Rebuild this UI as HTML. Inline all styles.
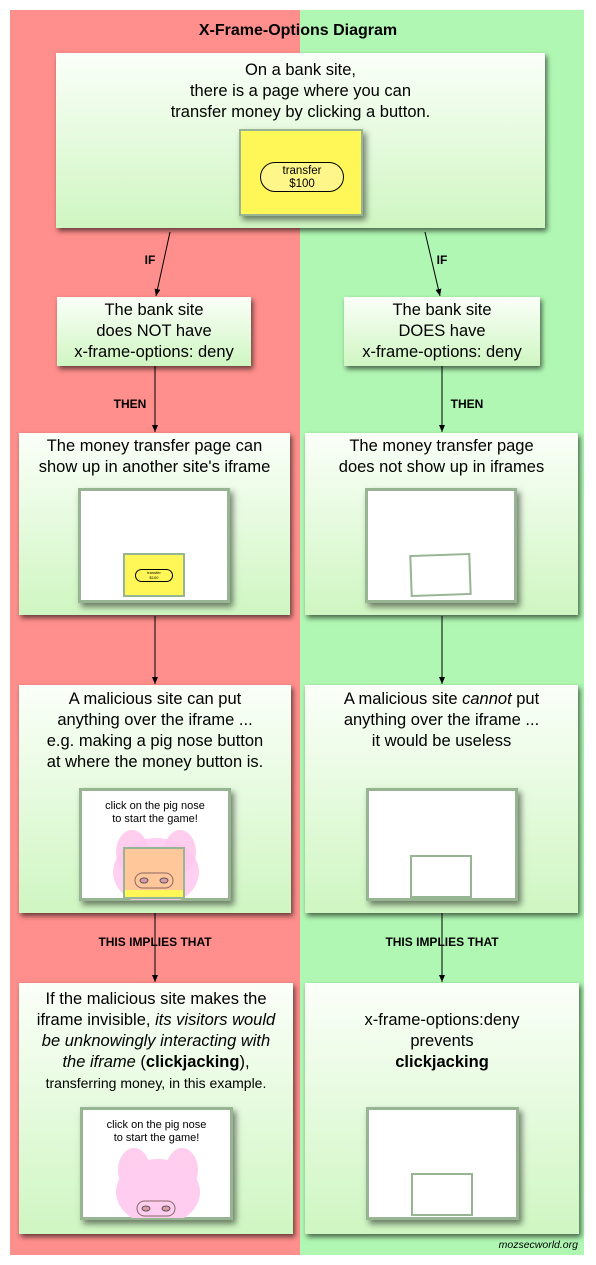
<!DOCTYPE html>
<html><head><meta charset="utf-8"><style>
*{margin:0;padding:0;box-sizing:border-box}
body{width:596px;height:1265px;background:#fff;position:relative;overflow:hidden;font-family:"Liberation Sans",Arial,sans-serif;color:#000}
.a{position:absolute}
.box{position:absolute;background:linear-gradient(#fbfff9,#cff6c2);box-shadow:2px 3px 5px rgba(0,0,0,.6);text-align:center;font-size:16.5px;line-height:21px}
.fr{position:absolute;background:#fff;border:3px solid #97b593;box-shadow:3px 4px 6px rgba(0,0,0,.5)}
.ir{position:absolute;border:2px solid #97b593;background:#fff}
.lbl{position:absolute;font-weight:bold;font-size:12px;text-align:center;width:200px}
.t{text-align:center;font-size:11px;line-height:13px}
</style></head><body>
<div class="a" style="left:10px;top:10px;width:290px;height:1245px;background:#ff8f8c"></div>
<div class="a" style="left:300px;top:10px;width:284px;height:1245px;background:#b0f7b3"></div>
<div class="a" style="left:0;top:22px;width:596px;text-align:center;font-weight:bold;font-size:16px">X-Frame-Options Diagram</div>

<svg class="a" style="left:0;top:0" width="596" height="1265">
<defs><marker id="m" markerWidth="8" markerHeight="8" refX="7" refY="4" orient="auto"><path d="M0,1 L7,4 L0,7z" fill="#000"/></marker></defs>
<g stroke="#000" stroke-width="1" marker-end="url(#m)">
<line x1="170" y1="232" x2="156" y2="296"/><line x1="425" y1="232" x2="440" y2="296"/>
<line x1="155" y1="366" x2="155" y2="432"/><line x1="442" y1="366" x2="442" y2="432"/>
<line x1="155" y1="616" x2="155" y2="684"/><line x1="442" y1="616" x2="442" y2="684"/>
<line x1="155" y1="913" x2="155" y2="982"/><line x1="442" y1="913" x2="442" y2="982"/>
</g></svg>

<div class="lbl" style="left:50px;top:253px">IF</div>
<div class="lbl" style="left:342px;top:253px">IF</div>
<div class="lbl" style="left:30px;top:397px">THEN</div>
<div class="lbl" style="left:367px;top:397px">THEN</div>
<div class="lbl" style="left:55px;top:935px">THIS IMPLIES THAT</div>
<div class="lbl" style="left:342px;top:935px">THIS IMPLIES THAT</div>

<div class="box" style="left:56px;top:53px;width:489px;height:175px;padding-top:7px">On a bank site,<br>there is a page where you can<br>transfer money by clicking a button.</div>
<div class="a" style="left:239px;top:129px;width:124px;height:87px;background:#fff658;border:2px solid #97b593;box-shadow:3px 4px 6px rgba(0,0,0,.5)">
<div class="a t" style="left:19px;top:31px;width:84px;height:30px;border:1px solid #000;border-radius:15px;background:#fff68a;padding-top:2px;font-size:11.5px">transfer<br>$100</div></div>

<div class="box" style="left:57px;top:297px;width:194px;height:69px;padding-top:3px">The bank site<br>does NOT have<br>x-frame-options: deny</div>
<div class="box" style="left:344px;top:297px;width:196px;height:69px;padding-top:3px">The bank site<br>DOES have<br>x-frame-options: deny</div>

<div class="box" style="left:19px;top:433px;width:271px;height:182px;padding-top:3px">The money transfer page can<br>show up in another site's iframe</div>
<div class="fr" style="left:78px;top:488px;width:152px;height:115px"></div>
<div class="a" style="left:123px;top:553px;width:62px;height:44px;background:#fff658;border:2px solid #97b593">
<div class="a" style="left:10px;top:14px;width:38px;height:13px;border:1px solid #000;border-radius:7px;font-size:4px;line-height:5px;text-align:center">transfer<br>$100</div></div>
<div class="box" style="left:305px;top:433px;width:273px;height:182px;padding-top:3px">The money transfer page<br>does not show up in iframes</div>
<div class="fr" style="left:365px;top:488px;width:152px;height:115px"></div>
<div class="ir" style="left:410px;top:554px;width:61px;height:42px;transform:rotate(-2deg)"></div>

<div class="box" style="left:19px;top:685px;width:272px;height:228px;padding-top:4px">A malicious site can put<br>anything over the iframe ...<br>e.g. making a pig nose button<br>at where the money button is.</div>
<div class="fr" style="left:79px;top:788px;width:152px;height:113px">
<div class="a t" style="left:0;top:9px;width:146px">click on the pig nose<br>to start the game!</div></div>
<svg class="a" style="left:110px;top:826px" width="92" height="74">
<ellipse cx="22" cy="26" rx="16" ry="22" fill="#ffc0ea" opacity=".8"/><ellipse cx="70" cy="26" rx="16" ry="22" fill="#ffc0ea" opacity=".8"/>
<ellipse cx="46" cy="46" rx="43" ry="34" fill="#ffc8ee" opacity=".85"/>
<rect x="14" y="22" width="60" height="50" fill="#ffc79a" stroke="#97b593" stroke-width="2"/>
<rect x="15" y="64" width="58" height="7" fill="#fff658"/>
<rect x="25" y="47" width="38" height="15" rx="7.5" fill="none" stroke="#866" stroke-width="1"/>
<ellipse cx="34" cy="54.5" rx="4" ry="2.5" fill="#d9a" stroke="#555"/><ellipse cx="54" cy="54.5" rx="4" ry="2.5" fill="#d9a" stroke="#555"/>
</svg>
<div class="box" style="left:305px;top:685px;width:273px;height:228px;padding-top:4px">A malicious site <i>cannot</i> put<br>anything over the iframe ...<br>it would be useless</div>
<div class="fr" style="left:366px;top:788px;width:152px;height:113px"></div>
<div class="ir" style="left:410px;top:855px;width:62px;height:43px"></div>

<div class="box" style="left:19px;top:983px;width:274px;height:251px;padding-top:6px">If the malicious site makes the<br>iframe invisible, <i>its visitors would<br>be unknowingly interacting with<br>the iframe</i> (<b>clickjacking</b>),<br><span style="font-size:14px">transferring money, in this example.</span></div>
<div class="fr" style="left:80px;top:1107px;width:153px;height:113px">
<div class="a t" style="left:0;top:9px;width:147px">click on the pig nose<br>to start the game!</div></div>
<svg class="a" style="left:112px;top:1146px" width="92" height="72">
<ellipse cx="22" cy="24" rx="16" ry="22" fill="#ffc0ea" opacity=".8"/><ellipse cx="70" cy="24" rx="16" ry="22" fill="#ffc0ea" opacity=".8"/>
<ellipse cx="46" cy="46" rx="42" ry="33" fill="#ffcdf0"/>
<rect x="25" y="55" width="38" height="15" rx="7.5" fill="none" stroke="#866"/>
<ellipse cx="34" cy="62.5" rx="4" ry="2.5" fill="#d9a" stroke="#555"/><ellipse cx="54" cy="62.5" rx="4" ry="2.5" fill="#d9a" stroke="#555"/>
</svg>
<div class="box" style="left:305px;top:983px;width:274px;height:251px;padding-top:27px">x-frame-options:deny<br>prevents<br><b>clickjacking</b></div>
<div class="fr" style="left:366px;top:1107px;width:153px;height:113px"></div>
<div class="ir" style="left:411px;top:1173px;width:62px;height:43px"></div>

<div class="a" style="left:470px;top:1239px;width:108px;text-align:right;font-style:italic;font-size:10.5px">mozsecworld.org</div>
</body></html>
